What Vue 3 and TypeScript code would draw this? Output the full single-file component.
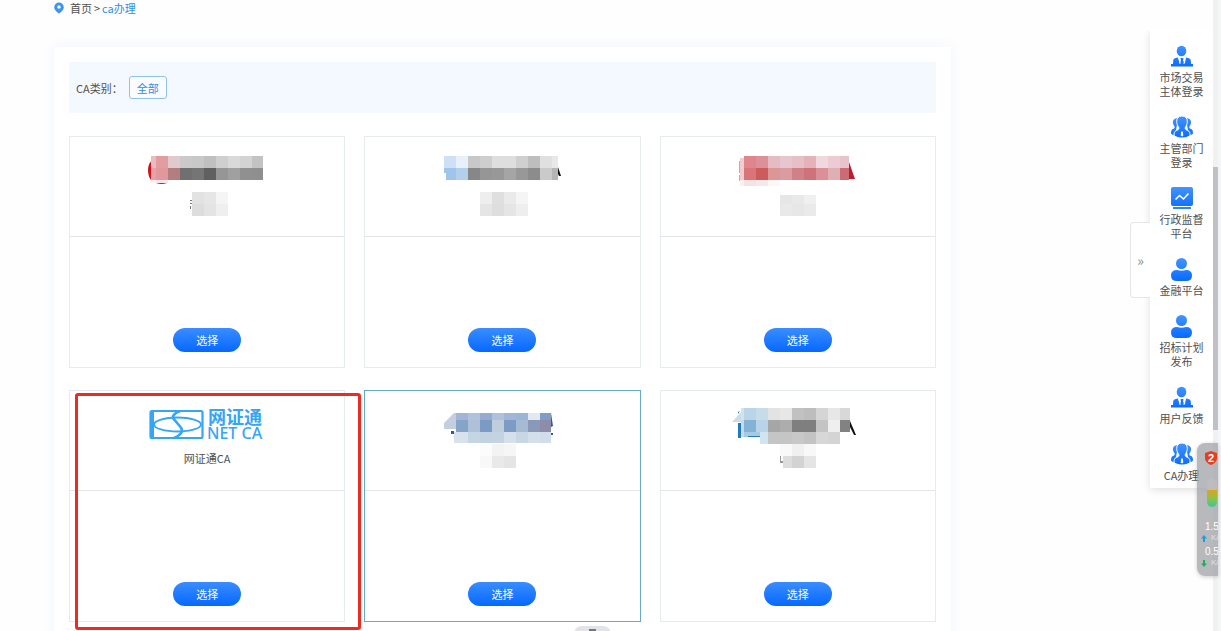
<script setup lang="ts">
interface Strip {
  x: number
  y: number
  h: number
  widths: number[]
  fills: string[]
}
interface Shape {
  d: string
  fill: string
}
interface Provider {
  id: number
  name: string
  active?: boolean
  marked?: boolean
  viewBox: string
  shapes: Shape[]
  strips: Strip[]
}
interface Cell {
  x: number
  y: number
  w: number
  h: number
  fill: string
}

const providers: Provider[] = [
  {
    id: 1,
    name: '',
    viewBox: '2 0 150 85',
    shapes: [
      { d: 'M21 21.500C17 25 17 35 21 40ZM26 43H37Q31.500 45 26 43Z', fill: '#c8141e' },
      { d: 'M60 60h2v1h-2zM60 63h2v1h-2zM60 66h1v3h-1z', fill: '#777' },
    ],
    strips: [
      { x: 21, y: 16, h: 12, widths: [5, 12, 12, 12, 12, 12, 12, 12, 12, 11], fills: ['#ebbcbf', '#e29da1', '#e1cacb', '#cacaca', '#c8c8c8', '#c0c0c0', '#cfcfcf', '#d9d9d9', '#d3d3d3', '#c3c3c3'] },
      { x: 21, y: 28, h: 12, widths: [5, 12, 12, 12, 12, 12, 12, 12, 12, 11], fills: ['#e7a2a7', '#e0989d', '#b47e80', '#707070', '#757575', '#606060', '#969696', '#a0a0a0', '#909090', '#8f8f8f'] },
      { x: 21, y: 40, h: 3, widths: [5, 12], fills: ['#faf0f2', '#f5e5e9'] },
      { x: 62, y: 52, h: 12, widths: [12, 12, 12], fills: ['#e2e2e2', '#e6e6e6', '#f5f5f5'] },
      { x: 62, y: 64, h: 12, widths: [12, 12, 12], fills: ['#dddddd', '#e4e4e4', '#efefef'] },
    ],
  },
  {
    id: 2,
    name: '',
    viewBox: '-3 0 150 85',
    shapes: [{ d: 'M128 27l3 9h-2l-1-2z', fill: '#111' }],
    strips: [
      { x: 14, y: 16, h: 12, widths: [12, 12, 12, 12, 24, 12, 12, 12, 6], fills: ['#cde0f6', '#e8f0fa', '#c8c8c8', '#cecece', '#dedede', '#cfcfcf', '#bebebe', '#e0e0e0', '#e8e8e8'] },
      { x: 14, y: 28, h: 5, widths: [2], fills: ['#9fc6ea'] },
      { x: 16, y: 28, h: 12, widths: [10, 12, 12, 12, 12, 12, 12, 12, 12, 6], fills: ['#9fc6ea', '#b2d0eb', '#878787', '#969696', '#989898', '#a5a5a5', '#989898', '#8c8c8c', '#cacaca', '#b5b5b5'] },
      { x: 50, y: 52, h: 12, widths: [12, 12, 12, 12], fills: ['#eeeeee', '#dfdfdf', '#eaeaea', '#f5f5f5'] },
      { x: 50, y: 64, h: 12, widths: [12, 12, 12, 12], fills: ['#e5e5e5', '#dedede', '#e5e5e5', '#eeeeee'] },
    ],
  },
  {
    id: 3,
    name: '',
    viewBox: '-2 0 150 85',
    shapes: [
      { d: 'M124 22l6 17h-6z', fill: '#bb1e2a' },
      { d: 'M14 21h1v12h-1zM14 35h1v6h-1z', fill: '#e59aa2' },
    ],
    strips: [
      { x: 15, y: 18, h: 24, widths: [4], fills: ['#f1cdd1'] },
      { x: 19, y: 16, h: 12, widths: [12, 12, 12, 12, 12, 12, 12, 12, 9], fills: ['#df858c', '#dc9198', '#e6bcc3', '#e7c6cf', '#e7bfc7', '#e5b2ba', '#f0d9de', '#edcbd2', '#e9c3cb'] },
      { x: 19, y: 28, h: 12, widths: [12, 12, 12, 12, 12, 12, 12, 12, 9], fills: ['#d97478', '#cc5b5d', '#db9695', '#da9ca0', '#cf8187', '#ce7379', '#db9097', '#e0afb4', '#cc6b75'] },
      { x: 15, y: 40, h: 6, widths: [4, 12, 12, 12], fills: ['#faf0f1', '#f5e2e5', '#f4e9ea', '#fbf8f6'] },
      { x: 55, y: 55, h: 9, widths: [12, 12, 12], fills: ['#e6e6e6', '#e9e9e9', '#f0f0f0'] },
      { x: 55, y: 64, h: 12, widths: [12, 12, 12], fills: ['#e9e9e9', '#e7e7e7', '#eaeaea'] },
    ],
  },
  { id: 4, name: '网证通CA', marked: true, viewBox: '0 0 116 34', shapes: [], strips: [] },
  {
    id: 5,
    name: '',
    active: true,
    viewBox: '-3 -1 150 85',
    shapes: [
      { d: 'M24 18L14 28v6h12V18z', fill: '#c3cfe1' },
      { d: 'M21 36h3v3h-3zM121 18l2 13-2 1zM121 38h2v2h-2z', fill: '#315b94' },
    ],
    strips: [
      { x: 26, y: 18, h: 7, widths: [12, 12, 12, 12, 12, 12, 12, 11], fills: ['#a2b5d4', '#b1c3da', '#94acd0', '#b0c1da', '#a2b6d5', '#9db5d5', '#e3e9f2', '#809dc6'] },
      { x: 26, y: 25, h: 12, widths: [12, 12, 12, 12, 12, 12, 12, 11], fills: ['#84a4c8', '#aec1d9', '#7c9bc4', '#bfcddd', '#7d9cc5', '#a5bad3', '#8b99b8', '#8e8cab'] },
      { x: 24, y: 37, h: 11, widths: [14, 12, 12, 12, 12, 12, 12, 11], fills: ['#d8e2ed', '#c6d5e4', '#c1d2e1', '#c3d3e2', '#d6e0eb', '#c9d7e5', '#d5dfe9', '#d1ddea'] },
      { x: 50, y: 49, h: 12, widths: [12, 12, 12], fills: ['#fcfcfc', '#f3f3f3', '#f6f6f6'] },
      { x: 50, y: 61, h: 12, widths: [12, 12, 12], fills: ['#f8f8f8', '#e9e9e9', '#e5e5e5'] },
    ],
  },
  {
    id: 6,
    name: '',
    viewBox: '3 -1 150 85',
    shapes: [
      { d: 'M22 16L12 27h12V16z', fill: '#c9dcea' },
      { d: 'M18 28h3v15h-3zM18 17l2-1-2 3z', fill: '#217abb' },
      { d: 'M130 26l6 14h-2l-4-8z', fill: '#111' },
      { d: 'M60 60h1v6h2v2h-3z', fill: '#999' },
    ],
    strips: [
      { x: 21, y: 13, h: 12, widths: [3, 12, 12, 12, 12, 12, 12, 12, 12, 10], fills: ['#d0e3ee', '#b9d5e8', '#c7dce9', '#e3e3e3', '#e7e7e7', '#c1c1c1', '#bdbdbd', '#d5d5d5', '#e7e7e7', '#d8d8d8'] },
      { x: 21, y: 25, h: 12, widths: [3, 12, 12, 12, 12, 24, 12, 12, 10], fills: ['#c5dbea', '#83b2d4', '#bad3e8', '#a6a6a6', '#adadad', '#7f7f7f', '#c4c4c4', '#efefef', '#828282'] },
      { x: 21, y: 37, h: 5, widths: [3, 16], fills: ['#c5dbea', '#a7cae1'] },
      { x: 28, y: 41, h: 1, widths: [12], fills: ['#217abb'] },
      { x: 40, y: 37, h: 12, widths: [8, 24, 12, 12, 12, 12], fills: ['#d0e4f1', '#c5c5c5', '#c8c8c8', '#c3c3c3', '#d7d7d7', '#d4d4d4'] },
      { x: 60, y: 49, h: 12, widths: [12, 12, 12], fills: ['#f9f9f9', '#f0f0f0', '#f8f8f8'] },
      { x: 63, y: 61, h: 12, widths: [9, 12, 12], fills: ['#dddddd', '#d3d3d3', '#e5e5e5'] },
    ],
  },
]

function cellsOf(p: Provider): Cell[] {
  const out: Cell[] = []
  for (const s of p.strips) {
    let x = s.x
    s.widths.forEach((w, i) => {
      out.push({ x, y: s.y, w, h: s.h, fill: s.fills[i] })
      x += w
    })
  }
  return out
}

type IconName = 'suit' | 'group' | 'chart' | 'user'
const links: { icon: IconName; lines: string[] }[] = [
  { icon: 'suit', lines: ['市场交易', '主体登录'] },
  { icon: 'group', lines: ['主管部门', '登录'] },
  { icon: 'chart', lines: ['行政监督', '平台'] },
  { icon: 'user', lines: ['金融平台'] },
  { icon: 'user', lines: ['招标计划', '发布'] },
  { icon: 'suit', lines: ['用户反馈'] },
  { icon: 'group', lines: ['CA办理'] },
]
</script>

<template>
  <div class="page">
    <svg class="defs" width="0" height="0" aria-hidden="true">
      <linearGradient id="blue" gradientUnits="userSpaceOnUse" x1="0" y1="0" x2="0" y2="22">
        <stop offset="0" stop-color="#4393ff" />
        <stop offset="1" stop-color="#0a6cff" />
      </linearGradient>
    </svg>

    <main class="main">
      <nav class="crumbs">
        <svg class="pin" viewBox="0 0 10 12">
          <path d="M5 0.500a4.800 4.800 0 0 1 4.800 4.800C9.800 8 6.800 10.300 5 11.700 3.200 10.300 0.200 8 0.200 5.300A4.800 4.800 0 0 1 5 0.500z" fill="#3d96ee" />
          <circle cx="5" cy="5" r="1.700" fill="#fff" />
        </svg>
        <a href="#" class="home">首页</a>
        <span>&gt;</span>
        <a href="#" class="here">ca办理</a>
      </nav>

      <section class="panel">
        <div class="filter">
          <span>CA类别：</span>
          <button type="button" class="tag">全部</button>
        </div>

        <div class="grid">
          <article v-for="p in providers" :key="p.id" class="card" :class="{ active: p.active }">
            <div class="head">
              <template v-if="p.name">
                <svg class="logo" :viewBox="p.viewBox">
                  <g fill="none" stroke="#35a5f5" stroke-width="2">
                    <rect x="1.500" y="3" width="52" height="27" rx="1.500" stroke-width="2.200" />
                    <path d="M3 3v27" stroke-width="4" />
                    <ellipse cx="28.500" cy="16.500" rx="23.500" ry="7" stroke-width="1.800" />
                    <path d="M31 3C25 5.500 22 8.500 25.500 12L31.500 19C35 23 32 27 25 30" stroke-width="2.600" />
                  </g>
                  <text class="logo-cn" x="59" y="16">网证通</text>
                  <text class="logo-en" x="58" y="31">NET CA</text>
                </svg>
                <p class="name">{{ p.name }}</p>
              </template>
              <svg v-else class="mosaic" :viewBox="p.viewBox" shape-rendering="crispEdges">
                <path v-for="(s, i) in p.shapes" :key="'s' + i" :d="s.d" :fill="s.fill" shape-rendering="auto" />
                <rect v-for="(c, i) in cellsOf(p)" :key="i" :x="c.x" :y="c.y" :width="c.w" :height="c.h" :fill="c.fill" />
              </svg>
            </div>
            <div class="body">
              <button type="button" class="choose">选择</button>
            </div>
            <span v-if="p.marked" class="mark"></span>
          </article>
        </div>
      </section>
    </main>

    <aside class="side">
      <button type="button" class="fold" aria-label="收起">»</button>
      <a v-for="(l, i) in links" :key="i" href="#" class="link">
        <svg class="icon" viewBox="0 0 22 23">
          <template v-if="l.icon === 'suit'">
            <ellipse cx="10.500" cy="6" rx="4.800" ry="5.200" fill="url(#blue)" />
            <path d="M7.400 12.200L4 13.200Q2.400 13.800 2.200 15.500L2 19H0v2.500h22V19h-2l-.2-3.500q-.2-1.700-1.800-2.300l-3.400-1L14 19l-2-3.500.6-2.300H9.400l.6 2.300L8.800 19z" fill="url(#blue)" />
            <path d="M7.300 12l2 7M14.700 12l-2 7" stroke="#fff" stroke-width="1" />
            <path d="M9.800 13h2.400l-.6 2 .9 4.500h-3L10.400 15z" fill="#1a75ff" />
          </template>
          <template v-else-if="l.icon === 'group'">
            <path d="M7.200 2.200C3.500 2 1.600 4 2 7c.2 1.700 1 2.500 1.600 3.500.4 1.500-.5 2-1.800 2.600C.6 13.700 0 15 0 17.500c1 1.100 2 1.700 4 2M14.800 2.200C18.500 2 20.400 4 20 7c-.2 1.700-1 2.500-1.600 3.500-.4 1.500.5 2 1.800 2.600 1.200.6 1.800 1.900 1.800 4.400-1 1.100-2 1.700-4 2" fill="url(#blue)" />
            <path d="M11 0c3.500 0 5.500 2.300 5.300 5.500-.1 2.500-.9 4.500-2 5.800-.5 2 .7 2.500 2.500 3.200 1.800.7 2.300 2.400 2.300 5C16.500 21.500 14 22 11 22s-5.500-.5-8-2.500c0-2.600.5-4.300 2.300-5 1.900-.7 3-1.200 2.500-3.200C6.600 10 5.800 8 5.700 5.500 5.500 2.300 7.500 0 11 0z" fill="url(#blue)" stroke="#fff" stroke-width="1" />
            <path d="M10.200 15.500h1.600l.5 4L11 20.500l-1.300-1z" fill="#fff" />
          </template>
          <template v-else-if="l.icon === 'chart'">
            <rect x="0" y="0" width="22" height="19" rx="2" fill="url(#blue)" />
            <rect x="2" y="20" width="18" height="2" fill="#2d84ff" />
            <path d="M4.500 12.500l4-4 4 3.500 5-5.500" fill="none" stroke="#fff" stroke-width="1.600" />
          </template>
          <template v-else>
            <circle cx="10.500" cy="5.500" r="5.500" fill="url(#blue)" />
            <path d="M6 12Q10.500 13.500 15 12q6 0 6 5.500T15 23H6Q0 23 0 17.500T6 12z" fill="url(#blue)" />
          </template>
        </svg>
        <span v-for="t in l.lines" :key="t">{{ t }}</span>
      </a>
    </aside>

    <div class="track"><div class="thumb"></div></div>
    <div class="edge"></div>

    <div class="meter">
      <div class="shield">
        <svg viewBox="0 0 14 14">
          <path d="M7 0l6 2v5c0 3.500-3 5.800-6 7-3-1.200-6-3.500-6-7V2z" fill="#e2401f" />
        </svg>
        <b>2</b>
      </div>
      <div class="gauge"></div>
      <div class="rate">
        <b>1.5</b>
        <span><svg viewBox="0 0 6 7"><path d="M3 0l3 3.500H4V7H2V3.500H0z" fill="#1e9be8" /></svg>K/s</span>
      </div>
      <div class="rate">
        <b>0.5</b>
        <span><svg viewBox="0 0 6 7"><path d="M3 7L0 3.500h2V0h2v3.500h2z" fill="#1faf5a" /></svg>K/s</span>
      </div>
    </div>

    <div class="handle"><span></span></div>
  </div>
</template>

<style>
body {
  margin: 0;
  background: #fefefe;
}
</style>

<style scoped>
.page {
  position: relative;
  display: flex;
  height: 100vh;
  overflow: hidden;
  font-family: 'Noto Sans CJK SC', sans-serif;
  font-size: 11px;
  line-height: 14px;
  color: #505050;
}
.defs {
  position: absolute;
}
a {
  color: inherit;
  text-decoration: none;
}
button {
  font: inherit;
  padding: 0;
  cursor: pointer;
}
.main {
  flex: 1;
  min-width: 0;
  padding: 0 199px 0 54px;
}
.crumbs {
  display: flex;
  align-items: center;
  gap: 2px;
  height: 15px;
}
.pin {
  width: 10px;
  height: 12px;
  margin-right: 4px;
}
.here {
  color: #2f8fe0;
}
.panel {
  margin-top: 32px;
  padding: 15px 15px 24px;
  background: #fff;
  box-shadow: 0 0 12px rgba(70, 110, 220, 0.07);
}
.filter {
  display: flex;
  align-items: center;
  gap: 6px;
  height: 51px;
  padding-left: 7px;
  background: #f4f8ff;
}
.tag {
  width: 38px;
  height: 23px;
  border: 1px solid #8fc1f0;
  border-radius: 3px;
  background: #f9fbff;
  color: #2f8fe0;
}
.grid {
  display: grid;
  grid-template-columns: repeat(3, 1fr);
  gap: 22px 19px;
  margin-top: 23px;
}
.card {
  position: relative;
  border: 1px solid #e6ebee;
  background: #fff;
}
.card.active {
  border-color: #67aac8;
}
.head {
  display: flex;
  flex-direction: column;
  align-items: center;
  height: 100px;
  padding-top: 3px;
  box-sizing: border-box;
  border-bottom: 1px solid #e3e6e9;
}
.mosaic {
  width: 150px;
  height: 85px;
}
.logo {
  width: 116px;
  height: 34px;
  margin-top: 14px;
  overflow: visible;
}
.logo text {
  fill: #35a5f5;
}
.logo-cn {
  font-size: 18px;
  font-weight: 700;
}
.logo-en {
  font-family: 'Noto Sans', 'Noto Sans CJK SC', sans-serif;
  font-size: 16px;
  font-weight: 500;
}
.name {
  margin: 9px 0 0;
}
.body {
  display: flex;
  justify-content: center;
  align-items: flex-end;
  height: 130px;
  padding-bottom: 15px;
  box-sizing: border-box;
}
.choose {
  width: 68px;
  height: 24px;
  border: 0;
  border-radius: 12px;
  background: linear-gradient(#3a8dff, #0568ff);
  color: #fff;
}
.mark {
  position: absolute;
  z-index: 1;
  inset: 2px -17px -9px 5px;
  border: 3px solid #ee2a22;
  border-radius: 3px;
  pointer-events: none;
}
.side {
  position: relative;
  display: flex;
  flex-direction: column;
  align-self: flex-start;
  gap: 18px;
  width: 63px;
  margin-top: 30px;
  padding: 15px 0 6px;
  box-sizing: border-box;
  background: #fff;
  box-shadow: 0 2px 8px rgba(0, 0, 0, 0.12);
  clip-path: inset(0 0 -12px -24px);
}
.fold {
  position: absolute;
  left: -20px;
  top: 192px;
  width: 20px;
  height: 76px;
  border: 1px solid #e6e6e6;
  border-right: 0;
  border-radius: 4px 0 0 4px;
  background: #fff;
  color: #888;
  font-size: 14px;
}
.link {
  display: flex;
  flex-direction: column;
  align-items: center;
}
.icon {
  width: 22px;
  height: 23px;
  margin-bottom: 2px;
}
.track {
  width: 5px;
  background: #f1f1f2;
}
.thumb {
  height: 263px;
  margin-top: 167px;
  background: #c1c1c3;
}
.edge {
  width: 3px;
  background: #f3f5fa;
}
.meter {
  position: absolute;
  top: 443px;
  right: 3px;
  display: flex;
  flex-direction: column;
  align-items: flex-end;
  width: 21px;
  height: 133px;
  border-radius: 8px 0 0 8px;
  background: rgba(160, 162, 166, 0.75);
  box-shadow: 0 1px 4px rgba(0, 0, 0, 0.2);
  overflow: hidden;
  color: #fff;
  font-family: 'Liberation Sans', sans-serif;
}
.shield {
  display: grid;
  width: 14px;
  height: 14px;
  margin: 8px 0 14px;
}
.shield svg,
.shield b {
  grid-area: 1 / 1;
  text-align: center;
}
.gauge {
  width: 10px;
  height: 28px;
  margin: 0 1px 14px 0;
  border-radius: 5px;
  background: linear-gradient(rgba(190, 190, 190, 0.8) 40%, #d9a520 40%, #8fc24a 70%, #35c79a);
}
.rate {
  width: 13px;
  height: 25px;
  font-size: 10px;
  line-height: 12px;
  white-space: nowrap;
}
.rate b {
  display: block;
  font-weight: 400;
}
.rate span {
  display: flex;
  align-items: center;
  gap: 4px;
  margin-left: -4px;
  font-size: 8px;
  line-height: 10px;
  color: #e0e0e0;
}
.rate svg {
  flex: none;
  width: 6px;
  height: 7px;
}
.handle {
  position: absolute;
  bottom: -5px;
  left: 574px;
  display: flex;
  justify-content: center;
  width: 37px;
  height: 10px;
  border-radius: 8px 8px 0 0;
  background: #e2e3e8;
}
.handle span {
  width: 7px;
  height: 2px;
  margin-top: 3px;
  background: #6d7588;
}
</style>
